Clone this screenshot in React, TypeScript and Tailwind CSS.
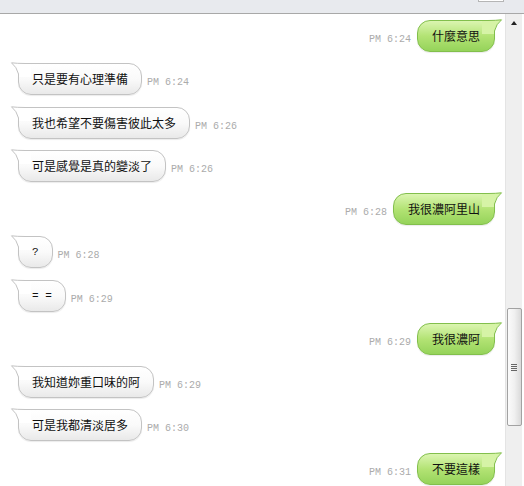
import React from "react";

type Msg = { side: "l" | "r"; text: string; time: string; mt: string };

const msgs: Msg[] = [
  { side: "r", text: "什麼意思", time: "PM 6:24", mt: "mt-0" },
  { side: "l", text: "只是要有心理準備", time: "PM 6:24", mt: "mt-[11px]" },
  { side: "l", text: "我也希望不要傷害彼此太多", time: "PM 6:26", mt: "mt-[12px]" },
  { side: "l", text: "可是感覺是真的變淡了", time: "PM 6:26", mt: "mt-[11px]" },
  { side: "r", text: "我很濃阿里山", time: "PM 6:28", mt: "mt-[11px]" },
  { side: "l", text: "?", time: "PM 6:28", mt: "mt-[11px]" },
  { side: "l", text: "= =", time: "PM 6:29", mt: "mt-[12px]" },
  { side: "r", text: "我很濃阿", time: "PM 6:29", mt: "mt-[11px]" },
  { side: "l", text: "我知道妳重口味的阿", time: "PM 6:29", mt: "mt-[11px]" },
  { side: "l", text: "可是我都清淡居多", time: "PM 6:30", mt: "mt-[11px]" },
  { side: "r", text: "不要這樣", time: "PM 6:31", mt: "mt-[12px]" },
];

function Tail({ fill, stroke }: { fill: string; stroke: string }) {
  return (
    <svg width="20" height="15" viewBox="0 0 20 15" className="block overflow-visible">
      <path d="M20 1.5 L14 1.5 Q6 1.5 0.5 0.8 Q5.8 5 7.5 12 L7.5 15 L20 15 Z" fill={fill} />
      <path d="M20 1.5 L14 1.5 Q6 1.5 0.5 0.8 Q5.8 5 7.5 12 L7.5 15" fill="none" stroke={stroke} strokeWidth="1" />
    </svg>
  );
}

function Time({ t, cls }: { t: string; cls: string }) {
  return (
    <span
      className={`mb-[6px] text-[10px] leading-[12px] text-[#ababab] whitespace-pre ${cls}`}
      style={{ fontFamily: '"Liberation Mono", monospace' }}
    >
      {t}
    </span>
  );
}

function Text({ text }: { text: string }) {
  const ascii = /^[\x20-\x7e]+$/.test(text);
  return (
    <span
      className={`relative leading-[14px] text-[#111] whitespace-pre ${ascii ? "text-[11px]" : "text-[12px]"}`}
      style={ascii ? { fontFamily: '"Liberation Mono", monospace' } : undefined}
    >
      {text}
    </span>
  );
}

function Row({ m }: { m: Msg }) {
  if (m.side === "l") {
    return (
      <div className={`flex items-end ${m.mt}`}>
        <div className="relative h-[32px] rounded-[13px] border border-[#c3c3c3] bg-gradient-to-b from-[#ffffff] via-[#fafafa] to-[#e9e9e9] px-[13px] flex items-center shadow-[0_1px_1px_rgba(0,0,0,0.08)]">
          <div className="absolute -left-[8px] -top-[2px]">
            <Tail fill="#ffffff" stroke="#c3c3c3" />
          </div>
          <Text text={m.text} />
        </div>
        <Time t={m.time} cls="ml-[5px]" />
      </div>
    );
  }
  return (
    <div className={`flex items-end justify-end ${m.mt}`}>
      <Time t={m.time} cls="mr-[6px]" />
      <div className="relative h-[32px] rounded-[13px] border border-[#82bf4c] bg-gradient-to-b from-[#dbf5b0] via-[#b3e374] to-[#95d35a] px-[14px] flex items-center shadow-[0_1px_1px_rgba(0,0,0,0.08)]">
        <div className="absolute -right-[8px] -top-[2px] -scale-x-100">
          <Tail fill="#d6f3a6" stroke="#82bf4c" />
        </div>
        <Text text={m.text} />
      </div>
    </div>
  );
}

export default function App() {
  return (
    <div
      className="w-[524px] h-[486px] bg-white overflow-hidden flex flex-col"
      style={{ fontFamily: '"Noto Sans CJK TC", "Noto Sans", sans-serif' }}
    >
      <div className="relative h-[14px] shrink-0 bg-[#e8eaee] border-b border-[#a8a8a8]">
        <div className="absolute right-[20px] -top-[2px] w-[26px] h-[4px] bg-white border border-[#b5b5b5]" />
      </div>
      <div className="flex flex-1 min-h-0">
        <div className="flex-1 flex flex-col pt-[6px] pl-[18px] pr-[10px]">
          {msgs.map((m, i) => (
            <Row key={i} m={m} />
          ))}
        </div>
        <div className="w-[17px] shrink-0 bg-[#efefef] border-l border-[#e4e4e4] flex flex-col items-center">
          <div className="mt-[7px] w-0 h-0 border-l-[3px] border-r-[3px] border-b-[4px] border-l-transparent border-r-transparent border-b-[#222]" />
          <div className="mt-[283px] w-[15px] h-[118px] rounded-[2px] border border-[#a2a2a2] bg-gradient-to-r from-[#fbfbfb] via-[#f0f0f0] to-[#dadada] flex flex-col items-center justify-center gap-[1px]">
            <div className="w-[6px] h-[1px] bg-[#666]" />
            <div className="w-[6px] h-[1px] bg-[#666]" />
            <div className="w-[6px] h-[1px] bg-[#666]" />
            <div className="w-[6px] h-[1px] bg-[#666]" />
          </div>
        </div>
        <div className="w-[2px] shrink-0 bg-white" />
      </div>
    </div>
  );
}
